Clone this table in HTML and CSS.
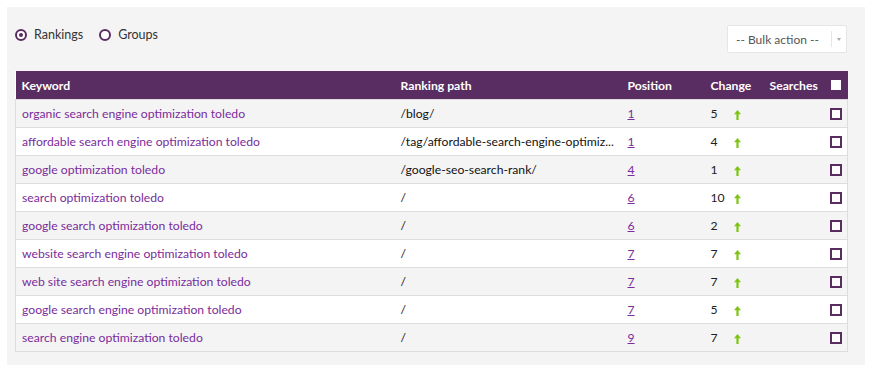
FILE: index.html
```html
<!doctype html>
<html lang="en">
<head>
  <meta charset="utf-8" />
  <link rel="stylesheet" href="styles.css">
</head>
<body>
  <div class="panel">
    <div class="toolbar">
      <div class="tabs">
        <label class="tab"><span class="radio checked"></span>Rankings</label>
        <label class="tab"><span class="radio"></span>Groups</label>
      </div>
      <div class="bulk">
        <span class="bulk-label">-- Bulk action --</span>
        <span class="bulk-caret"></span>
      </div>
    </div>

    <table class="rankings">
      <colgroup>
        <col class="c-keyword">
        <col class="c-path">
        <col class="c-pos">
        <col class="c-change">
        <col class="c-searches">
        <col class="c-check">
      </colgroup>
      <thead>
        <tr>
          <th>Keyword</th>
          <th>Ranking path</th>
          <th>Position</th>
          <th>Change</th>
          <th>Searches</th>
          <th><span class="box head"></span></th>
        </tr>
      </thead>
      <tbody id="rows"></tbody>
    </table>
  </div>

  <script>
    const rows = [
      ['organic search engine optimization toledo', '/blog/', 1, 5],
      ['affordable search engine optimization toledo', '/tag/affordable-search-engine-optimiz...', 1, 4],
      ['google optimization toledo', '/google-seo-search-rank/', 4, 1],
      ['search optimization toledo', '/', 6, 10],
      ['google search optimization toledo', '/', 6, 2],
      ['website search engine optimization toledo', '/', 7, 7],
      ['web site search engine optimization toledo', '/', 7, 7],
      ['google search engine optimization toledo', '/', 7, 5],
      ['search engine optimization toledo', '/', 9, 7]
    ];

    const arrow = '<svg class="up" width="7" height="10" viewBox="0 0 7 10"><path d="M3.5 0 L7 4.2 H4.6 V10 H2.4 V4.2 H0 Z" fill="#7dc313"/></svg>';

    document.getElementById('rows').innerHTML = rows.map(r => `
      <tr>
        <td><a class="kw" href="#">${r[0]}</a></td>
        <td class="path">${r[1]}</td>
        <td><a class="pos" href="#">${r[2]}</a></td>
        <td class="change"><span class="num">${r[3]}</span>${arrow}</td>
        <td></td>
        <td><span class="box"></span></td>
      </tr>
    `).join('');
  </script>
</body>
</html>
```

FILE: styles.css
```css
body {
  margin: 0;
  padding: 7px 8px 6px 7px;
  background: #fff;
  font-family: Lato, 'Open Sans', sans-serif;
  font-size: 12.2px;
  color: #222;
}

.panel {
  background: #f4f4f4;
  padding: 18px 19px 13px 8px;
}

.toolbar {
  display: flex;
  justify-content: space-between;
  align-items: flex-start;
  height: 47px;
}

.tabs {
  display: flex;
  gap: 16px;
  padding-top: 2px;
}

.tab {
  display: flex;
  align-items: center;
  gap: 7px;
  color: #333;
  font-size: 12.5px;
}

.radio {
  width: 8px;
  height: 8px;
  border: 2px solid #5a2d62;
  border-radius: 50%;
  background: #fff;
  position: relative;
}

.radio.checked::after {
  content: '';
  position: absolute;
  left: 2px;
  top: 2px;
  width: 4px;
  height: 4px;
  border-radius: 50%;
  background: #5a2d62;
}

.bulk {
  width: 118px;
  height: 26px;
  background: #fff;
  border: 1px solid #e6e6e6;
  border-radius: 2px;
  display: flex;
  align-items: center;
  margin-right: -1px;
}

.bulk-label {
  flex: 1;
  padding-left: 8px;
  color: #555;
  font-size: 12px;
}

.bulk-caret {
  width: 14px;
  height: 16px;
  border-left: 1px solid #e6e6e6;
  position: relative;
}

.bulk-caret::after {
  content: '';
  position: absolute;
  left: 5px;
  top: 7px;
  border-left: 2px solid transparent;
  border-right: 2px solid transparent;
  border-top: 3px solid #aaa;
}

.rankings {
  width: 832px;
  border-collapse: collapse;
  table-layout: fixed;
  background: #fff;
  margin-top: -1px;
}

.c-keyword { width: 379px; }
.c-path { width: 227px; }
.c-pos { width: 83px; }
.c-change { width: 59px; }
.c-searches { width: 60px; }
.c-check { width: 24px; }

.rankings th {
  background: #5a2d62;
  color: #fff;
  font-weight: bold;
  text-align: left;
  height: 28px;
  padding: 0 0 0 6px;
  white-space: nowrap;
}

.rankings td {
  height: 27px;
  padding: 0 0 0 6px;
  border-top: 1px solid #ddd;
  white-space: nowrap;
  overflow: hidden;
}

.rankings tbody tr:nth-child(odd) td {
  background: #f4f4f4;
}

.rankings tbody tr td:first-child {
  border-left: 1px solid #ddd;
}

.rankings tbody tr td:last-child {
  border-right: 1px solid #ddd;
}

.rankings tbody tr:last-child td {
  border-bottom: 1px solid #ddd;
}

.kw {
  color: #7a2c9c;
  text-decoration: none;
}

.path {
  color: #111;
}

.pos {
  color: #7a2c9c;
  text-decoration: underline;
}

.change .num {
  display: inline-block;
  width: 21px;
  color: #222;
}

.up {
  vertical-align: -2px;
  margin-left: 2px;
}

.box {
  display: block;
  width: 8px;
  height: 8px;
  border: 2px solid #5a2d62;
  background: #fff;
}

.box.head {
  width: 8px;
  height: 8px;
  border: 1px solid #fff;
  background: #fff;
  margin-left: 1px;
}
```
